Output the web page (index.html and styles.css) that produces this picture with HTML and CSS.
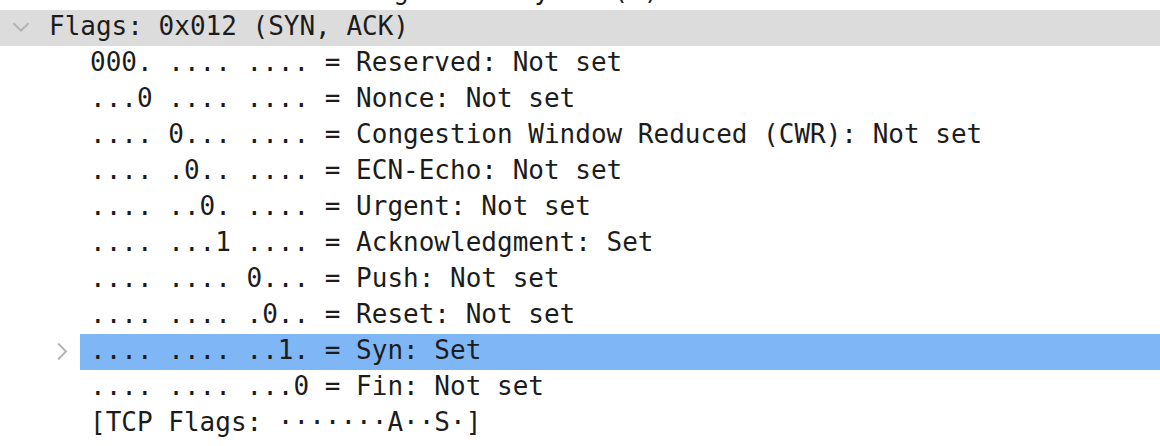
FILE: index.html
```html
<!DOCTYPE html>
<html>
<head>
<meta charset="utf-8">
<link rel="stylesheet" href="styles.css">
</head>
<body>
<div class="tree">
  <div class="row">
    <span class="twisty"></span>
    <span class="label">0101 .... = Header Length: 20 bytes (5)</span>
  </div>
  <div class="row parent">
    <span class="twisty">
      <svg class="chev" width="16" height="20" viewBox="0 0 16 20"><path d="M1.2 6 L8 12.5 L14.8 6"/></svg>
    </span>
    <span class="label">Flags: 0x012 (SYN, ACK)</span>
  </div>
  <div class="row"><span class="indent"></span><span class="twisty"></span><span class="label">000. .... .... = Reserved: Not set</span></div>
  <div class="row"><span class="indent"></span><span class="twisty"></span><span class="label">...0 .... .... = Nonce: Not set</span></div>
  <div class="row"><span class="indent"></span><span class="twisty"></span><span class="label">.... 0... .... = Congestion Window Reduced (CWR): Not set</span></div>
  <div class="row"><span class="indent"></span><span class="twisty"></span><span class="label">.... .0.. .... = ECN-Echo: Not set</span></div>
  <div class="row"><span class="indent"></span><span class="twisty"></span><span class="label">.... ..0. .... = Urgent: Not set</span></div>
  <div class="row"><span class="indent"></span><span class="twisty"></span><span class="label">.... ...1 .... = Acknowledgment: Set</span></div>
  <div class="row"><span class="indent"></span><span class="twisty"></span><span class="label">.... .... 0... = Push: Not set</span></div>
  <div class="row"><span class="indent"></span><span class="twisty"></span><span class="label">.... .... .0.. = Reset: Not set</span></div>
  <div class="row"><span class="indent"></span>
    <span class="twisty">
      <svg class="chev" width="16" height="20" viewBox="0 0 16 20"><path d="M4.8 2.2 L12 9.5 L4.8 16.8"/></svg>
    </span>
    <span class="label selected">.... .... ..1. = Syn: Set</span></div>
  <div class="row"><span class="indent"></span><span class="twisty"></span><span class="label">.... .... ...0 = Fin: Not set</span></div>
  <div class="row"><span class="indent"></span><span class="twisty"></span><span class="label">[TCP Flags: ·······A··S·]</span></div>
</div>
</body>
</html>
```
FILE: styles.css
```css
html, body {
  margin: 0;
  padding: 0;
  background: #ffffff;
  overflow: hidden;
}
body {
  width: 1160px;
  height: 446px;
}
.tree {
  margin-top: -26px;
  font-family: "DejaVu Sans Mono", "Liberation Mono", monospace;
  font-size: 26px;
  color: #1c1c1c;
}
.row {
  display: flex;
  height: 36px;
}
.row.parent {
  background: #dcdcdc;
}
.indent {
  flex: 0 0 41px;
}
.twisty {
  flex: 0 0 39px;
  display: flex;
  align-items: center;
  padding-left: 13px;
  box-sizing: border-box;
}
.chev {
  display: block;
  fill: none;
  stroke: #b4b4b4;
  stroke-width: 2;
  stroke-linecap: square;
  stroke-linejoin: miter;
}
.label {
  flex: 1 1 auto;
  padding-left: 10px;
  line-height: 32px;
  padding-bottom: 4px;
  white-space: pre;
}
.label.selected {
  background: #7fb6f5;
}
```
